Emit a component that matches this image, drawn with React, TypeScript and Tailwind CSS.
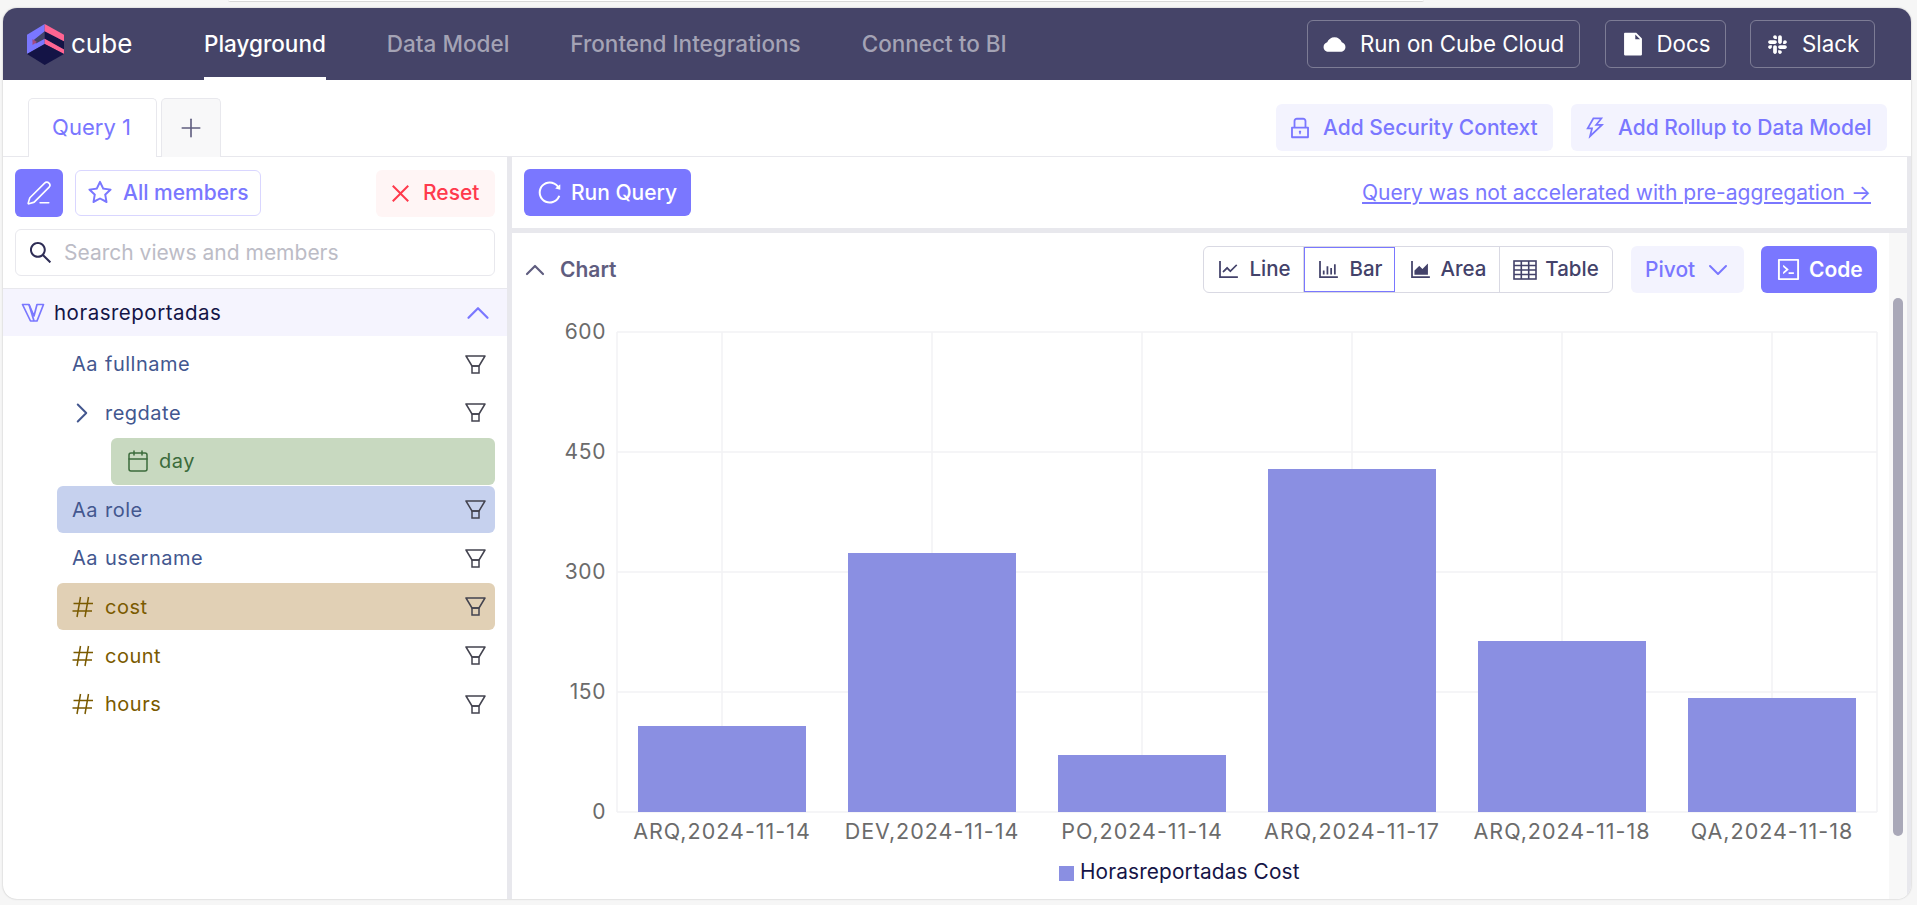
import { ReactNode } from "react";
import {
  AiFillCloud,
  AiFillFile,
  AiOutlineAreaChart,
  AiOutlineBarChart,
  AiOutlineClose,
  AiOutlineCode,
  AiOutlineLineChart,
  AiOutlineLock,
  AiOutlineReload,
  AiOutlineSearch,
  AiOutlineSlack,
  AiOutlineStar,
  AiOutlineThunderbolt,
} from "react-icons/ai";
import { Calendar, ChevronDown, ChevronRight, ChevronUp, PenLine, Plus } from "lucide-react";

const bars = [
  { label: "ARQ,2024-11-14", top: 726 },
  { label: "DEV,2024-11-14", top: 553 },
  { label: "PO,2024-11-14", top: 755 },
  { label: "ARQ,2024-11-17", top: 469 },
  { label: "ARQ,2024-11-18", top: 641 },
  { label: "QA,2024-11-18", top: 698 },
];

const yTicks = [
  { label: "600", y: 332 },
  { label: "450", y: 452 },
  { label: "300", y: 572 },
  { label: "150", y: 692 },
  { label: "0", y: 812 },
];

function CubeLogo() {
  return (
    <svg width="37" height="41" viewBox="0 0 37 41" className="shrink-0">
      <polygon points="17.7,0 0,10.7 0,30 17.7,20 17.7,14.7 9,19.5 5.5,17 17.7,7.3" fill="#7a77ff" />
      <polygon points="5.5,15 10,18 5.5,21" fill="#a34a82" />
      <polygon points="17.7,7.3 37,17.3 37,25.5 17.7,14.7" fill="#141446" />
      <polygon points="17.7,0 37,10.7 37,17.3 17.7,7.3" fill="#ff6492" />
      <polygon points="17.7,14.7 37,25.5 37,30 17.7,20" fill="#ff6492" />
      <polygon points="0,30 17.7,20 37,30 17.7,41" fill="#141446" />
    </svg>
  );
}

function ViewIcon() {
  return (
    <svg width="24" height="20" viewBox="0 0 24 20" fill="none" stroke="#7a77ff" strokeWidth="1.7" strokeLinejoin="round" className="shrink-0">
      <path d="M1.5 1.5H8L13 13L16 1.5H22.5L16 18H9.5L1.5 1.5Z" />
      <path d="M8 1.5L13 18" />
    </svg>
  );
}

function FunnelIcon() {
  return (
    <svg width="21" height="19" viewBox="0 0 21 19" fill="none" stroke="#43434f" strokeWidth="1.5" className="shrink-0">
      <path d="M1 1H20L14 11H7L1 1Z" strokeLinejoin="round" />
      <rect x="7" y="11" width="7" height="7" />
    </svg>
  );
}

function TableIcon() {
  return (
    <svg width="24" height="20" viewBox="0 0 24 20" fill="none" stroke="#43426a" strokeWidth="1.6" className="shrink-0">
      <rect x="1" y="1" width="22" height="18" />
      <path d="M1 5.5H23M1 10H23M1 14.5H23M8.3 1V19M15.7 1V19" />
    </svg>
  );
}

function HashIcon() {
  return (
    <span className="w-[33px] shrink-0">
      <svg width="22" height="22" viewBox="0 0 22 22" fill="none" stroke="#7a5a00" strokeWidth="1.5">
        <path d="M8.5 1L5 21M16.5 1L13 21M1.5 7.5H21M0.5 15H20" />
      </svg>
    </span>
  );
}

function NavButton({ icon, label, width, gap }: { icon: ReactNode; label: string; width: string; gap: string }) {
  return (
    <button className={`flex h-12 items-center rounded-md border border-white/30 pl-[14px] text-[22.3px] text-white ${gap} ${width}`}>
      {icon}
      {label}
    </button>
  );
}

function SoftButton({ icon, label, width }: { icon: ReactNode; label: string; width: string }) {
  return (
    <button className={`flex h-[47px] items-center gap-[10px] rounded-md bg-[#f3f3fe] pl-[11px] text-[21px] font-medium text-[#7a77ff] ${width}`}>
      {icon}
      {label}
    </button>
  );
}

function ChartType({ icon, label, width, active }: { icon: ReactNode; label: string; width: string; active?: boolean }) {
  return (
    <button
      className={`flex h-full items-center justify-center gap-[8px] text-[20.5px] font-medium ${width} ${
        active ? "border border-[#7a77ff]" : "border-r border-[#d9d9e3] last:border-r-0"
      }`}
    >
      {icon}
      {label}
    </button>
  );
}

function MemberRow({
  name,
  lead,
  color,
  bg = "",
  indent = "ml-[54px]",
  filter = true,
}: {
  name: string;
  lead: ReactNode;
  color: string;
  bg?: string;
  indent?: string;
  filter?: boolean;
}) {
  return (
    <div className={`mr-3 flex h-[47px] items-center rounded-md pl-[15px] pr-[9px] text-[20px] ${indent} ${bg} ${color}`}>
      {lead}
      <span className="tracking-[0.5px]">{name}</span>
      {filter && (
        <span className="ml-auto">
          <FunnelIcon />
        </span>
      )}
    </div>
  );
}

function TextLead() {
  return <span className="w-[33px] shrink-0 tracking-[0.4px]">Aa</span>;
}

function Sidebar() {
  return (
    <aside className="w-[509px] shrink-0 border-r-[5px] border-[#e8e8ed] pt-3">
      <div className="flex items-center px-3">
        <button className="flex h-12 w-12 items-center justify-center rounded-md bg-[#7a77ff] text-white">
          <PenLine size={26} strokeWidth={1.5} />
        </button>
        <button className="ml-3 flex h-[46px] w-[186px] items-center gap-[9px] rounded-md border border-[#d9d6ff] pl-[10px] text-[21px] font-medium text-[#7a77ff]">
          <AiOutlineStar size={28} />
          All members
        </button>
        <button className="ml-auto flex h-[47px] w-[119px] items-center gap-[10px] rounded-md bg-[#fff5f5] pl-3 text-[21px] font-medium text-[#ff3a4c]">
          <AiOutlineClose size={25} />
          Reset
        </button>
      </div>
      <div className="mx-3 mt-3 flex h-[47px] items-center gap-[10px] rounded-md border border-[#e8e8ed] pl-[11px] text-[21px] text-[#bcbcc6]">
        <AiOutlineSearch size={27} className="text-[#2e2d55]" />
        Search views and members
      </div>
      <div className="mt-3 flex h-[48px] items-center border-t border-[#e8e8ed] bg-[#f5f4fe] pl-[18px] pr-[10px] pt-px text-[20.5px] tracking-[0.5px] text-[#141446]">
        <ViewIcon />
        <span className="ml-[9px]">horasreportadas</span>
        <ChevronUp size={38} strokeWidth={1.4} className="ml-auto text-[#7a77ff]" />
      </div>
      <div className="mt-[4.5px] flex flex-col gap-[1.6px]">
        <MemberRow name="fullname" lead={<TextLead />} color="text-[#43578f]" />
        <MemberRow
          name="regdate"
          lead={<ChevronRight size={34} strokeWidth={1.4} className="-ml-[7px] mr-[6px] shrink-0" />}
          color="text-[#43578f]"
        />
        <MemberRow
          name="day"
          indent="ml-[108px]"
          bg="bg-[#c8d9c0]"
          color="text-[#3b6b3b]"
          filter={false}
          lead={<Calendar size={24} strokeWidth={1.5} className="mr-[9px] shrink-0" />}
        />
        <MemberRow name="role" lead={<TextLead />} bg="bg-[#c6d1ee]" color="text-[#43578f]" />
        <MemberRow name="username" lead={<TextLead />} color="text-[#43578f]" />
        <MemberRow name="cost" lead={<HashIcon />} bg="bg-[#e1d0b5]" color="text-[#7a5a00]" />
        <MemberRow name="count" lead={<HashIcon />} color="text-[#7a5a00]" />
        <MemberRow name="hours" lead={<HashIcon />} color="text-[#7a5a00]" />
      </div>
    </aside>
  );
}

function BarChart() {
  return (
    <svg width="1377" height="606" viewBox="512 293 1377 606" className="block [font-family:Inter,sans-serif]">
      {yTicks.map((t) => (
        <g key={t.label}>
          <line x1="617" x2="1877" y1={t.y} y2={t.y} stroke="#f2f2f4" strokeWidth="1.5" />
          <text x="606" y={t.y + 7} textAnchor="end" fontSize="21" letterSpacing="0.6" fill="#6b6b6b">
            {t.label}
          </text>
        </g>
      ))}
      <line x1="617" x2="617" y1="332" y2="812" stroke="#f2f2f4" strokeWidth="1.5" />
      <line x1="1877" x2="1877" y1="332" y2="812" stroke="#f2f2f4" strokeWidth="1.5" />
      {bars.map((b, i) => {
        const cx = 722 + i * 210;
        return (
          <g key={b.label}>
            <line x1={cx} x2={cx} y1="332" y2="812" stroke="#f2f2f4" strokeWidth="1.5" />
            <rect x={cx - 84} y={b.top} width="168" height={812 - b.top} fill="#8a8fe2" />
            <text x={cx} y="839" textAnchor="middle" fontSize="21.5" letterSpacing="1" fill="#6b6b6b">
              {b.label}
            </text>
          </g>
        );
      })}
      <rect x="1059" y="866" width="15" height="15" fill="#8a8fe2" />
      <text x="1080" y="879" fontSize="20.8" letterSpacing="0.15" fill="#141446">
        Horasreportadas Cost
      </text>
    </svg>
  );
}

function QueryPanel() {
  return (
    <main className="flex min-w-0 flex-1 flex-col">
      <div className="flex h-[76px] shrink-0 items-center justify-between border-b-[5px] border-[#e8e8ed] pl-3 pr-9">
        <button className="flex h-[47px] w-[167px] items-center gap-[8px] rounded-md bg-[#7a77ff] pl-3 text-[21px] font-medium text-white">
          <AiOutlineReload size={27} />
          Run Query
        </button>
        <a className="text-[21.05px] text-[#7a77ff] underline">Query was not accelerated with pre-aggregation →</a>
      </div>
      <div className="flex min-h-0 flex-1">
        <div className="w-[1377px] shrink-0">
          <div className="flex h-[60px] items-end pl-[7px] pr-3">
            <div className="flex h-[47px] items-center gap-[9px] text-[21px] font-semibold text-[#5f5d7f]">
              <ChevronUp size={32} strokeWidth={1.6} />
              Chart
            </div>
            <div className="ml-auto flex h-[47px] overflow-hidden rounded-md border border-[#d9d9e3] text-[#43426a]">
              <ChartType icon={<AiOutlineLineChart size={25} />} label="Line" width="w-[100px]" />
              <ChartType icon={<AiOutlineBarChart size={25} />} label="Bar" width="w-[91px]" active />
              <ChartType icon={<AiOutlineAreaChart size={25} />} label="Area" width="w-[105px]" />
              <ChartType icon={<TableIcon />} label="Table" width="w-[112px]" />
            </div>
            <button className="ml-[18px] flex h-[47px] w-[113px] items-center gap-[1px] rounded-md bg-[#f3f3fe] pl-[14px] text-[21px] font-medium text-[#7a77ff]">
              Pivot
              <ChevronDown size={32} strokeWidth={1.5} className="ml-[6px]" />
            </button>
            <button className="ml-[17px] flex h-[47px] w-[116px] items-center gap-[7px] rounded-md bg-[#7a77ff] pl-[14px] text-[21px] font-semibold text-white">
              <AiOutlineCode size={27} />
              Code
            </button>
          </div>
          <BarChart />
        </div>
        <div className="w-[18px] shrink-0 bg-[#f8f8f8] pt-[65px]">
          <div className="mx-1 h-[538px] w-[10px] rounded-md bg-[#a9a8b8]" />
        </div>
      </div>
    </main>
  );
}

export default function App() {
  return (
    <div className="h-[905px] w-[1917px] overflow-hidden bg-[#f6f6f6] [font-family:Inter,sans-serif]">
      <div className="h-2">
        <div className="ml-[228px] h-[2px] w-[1196px] rounded-b border-b border-[#d8d8d8] bg-white" />
      </div>
      <div className="ml-[3px] flex h-[891px] w-[1908px] flex-col overflow-hidden rounded-[14px] bg-white shadow-[0_0_2px_rgba(0,0,0,0.25)]">
        <header className="flex h-[72px] shrink-0 items-center bg-[#454468] pr-9">
          <div className="flex w-[201px] shrink-0 items-center gap-[7px] pl-6">
            <CubeLogo />
            <span className="text-[26px] leading-none text-white">cube</span>
          </div>
          <nav className="flex h-full gap-[61px] text-[22.5px] font-medium text-[#a4a3b5]">
            <a className="flex items-center border-b-[3px] border-white pt-[3px] text-white">Playground</a>
            <a className="flex items-center">Data Model</a>
            <a className="flex items-center">Frontend Integrations</a>
            <a className="flex items-center">Connect to BI</a>
          </nav>
          <div className="ml-auto flex gap-[24.5px]">
            <NavButton icon={<AiFillCloud size={25} />} label="Run on Cube Cloud" width="w-[273px]" gap="gap-[13px]" />
            <NavButton icon={<AiFillFile size={26} />} label="Docs" width="w-[121px]" gap="gap-[11px]" />
            <NavButton icon={<AiOutlineSlack size={25} />} label="Slack" width="w-[125px]" gap="gap-[12px]" />
          </div>
        </header>
        <div className="flex h-[77px] shrink-0 border-b border-[#e8e8ed] pl-[25px] pr-6">
          <div className="-mb-px flex self-end">
            <div className="flex h-[59px] w-[129px] items-center justify-center rounded-t-[5px] border border-b-0 border-[#e8e8ed] bg-white pb-px pr-[2px] text-[22px] text-[#7a77ff]">
              Query 1
            </div>
            <div className="ml-1 flex h-[59px] w-[60px] items-center justify-center rounded-t-[5px] border border-b-0 border-[#e8e8ed] bg-[#f8f8f9] text-[#5f5d7f]">
              <Plus size={30} strokeWidth={1.3} />
            </div>
          </div>
          <div className="mb-[5px] ml-auto flex gap-[18px] self-end">
            <SoftButton icon={<AiOutlineLock size={26} />} label="Add Security Context" width="w-[277px]" />
            <SoftButton icon={<AiOutlineThunderbolt size={26} />} label="Add Rollup to Data Model" width="w-[316px]" />
          </div>
        </div>
        <div className="flex min-h-0 flex-1 border-r-4 border-[#e8e8ed]">
          <Sidebar />
          <QueryPanel />
        </div>
      </div>
    </div>
  );
}
